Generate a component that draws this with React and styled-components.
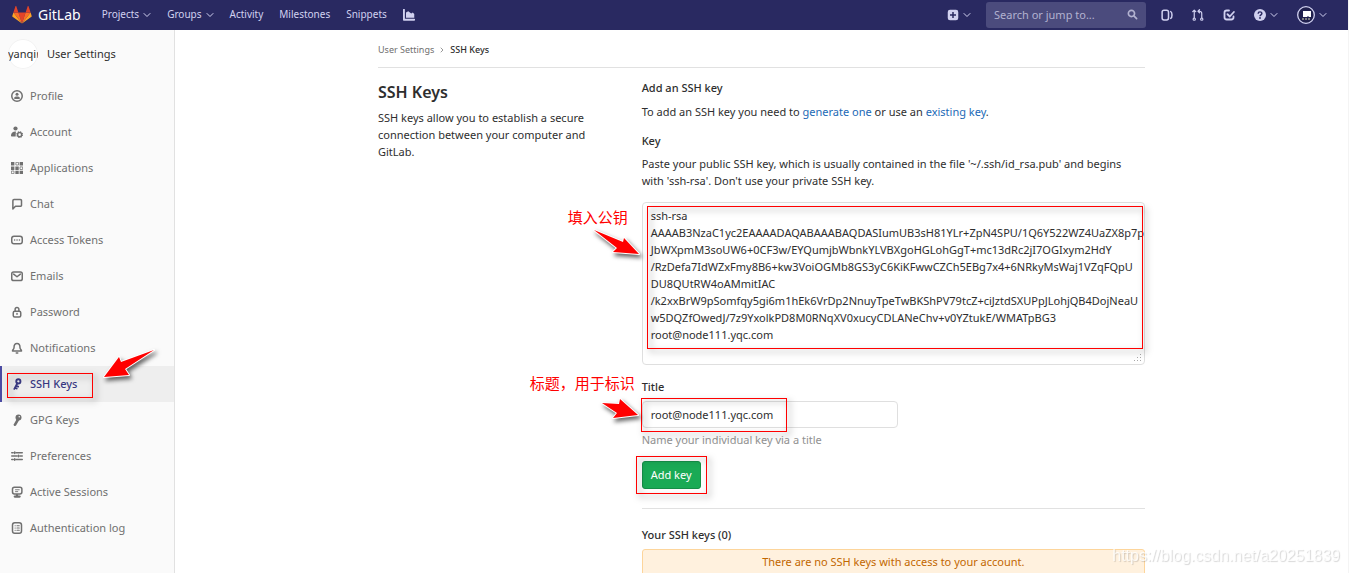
import React from 'react';
import styled, { createGlobalStyle } from 'styled-components';

const GlobalStyle = createGlobalStyle`
  *, *::before, *::after {
    box-sizing: border-box;
  }

  body {
    margin: 0;
    background: #fff;
    color: #2e2e2e;
    font-family: 'Noto Sans', 'Noto Sans CJK SC', sans-serif;
    font-size: 11px;
    line-height: 17px;
  }

  h1, h2, p {
    margin: 0;
  }
`;

const Page = styled.div`
  height: 100vh;
  display: flex;
  flex-direction: column;
  overflow: hidden;
  border-right: 1px solid #f4f4f4;
`;

const Navbar = styled.header`
  height: 30px;
  flex-shrink: 0;
  display: flex;
  align-items: center;
  justify-content: space-between;
  padding: 0 21px 1px 12px;
  background: #292961;
  color: #d1d1f0;
`;

const NavGroup = styled.nav`
  display: flex;
  align-items: center;
  gap: ${props => props.$gap}px;
`;

const Brand = styled.a`
  display: flex;
  align-items: center;
  gap: 6px;
  margin-right: 5px;
  color: #fff;
  font-size: 14px;
  text-decoration: none;
`;

const NavLink = styled.a`
  display: flex;
  align-items: center;
  gap: 4px;
  color: #d1d1f0;
  font-size: 10px;
  text-decoration: none;
`;

const NavButton = styled.button`
  display: flex;
  align-items: center;
  gap: 4px;
  padding: 0;
  border: none;
  background: none;
  color: #d1d1f0;
  font: inherit;
  font-size: 10px;
  cursor: pointer;
`;

const SearchBox = styled.label`
  width: 160px;
  height: 26px;
  display: flex;
  align-items: center;
  padding: 0 8px;
  border-radius: 3px;
  background: #4b4b7d;
  color: #b2b2d0;
`;

const SearchInput = styled.input`
  flex: 1;
  min-width: 0;
  padding: 0;
  border: none;
  outline: none;
  background: transparent;
  color: #fff;
  font: inherit;

  &::placeholder {
    color: #b2b2d0;
    opacity: 1;
  }
`;

const Body = styled.div`
  flex: 1;
  min-height: 0;
  display: flex;
`;

const Sidebar = styled.aside`
  width: 175px;
  flex-shrink: 0;
  background: #fafafa;
  border-right: 1px solid #e1e1e1;
  line-height: 16px;
`;

const SidebarHeader = styled.a`
  height: 48px;
  display: flex;
  align-items: center;
  gap: 9px;
  padding-left: 8px;
  color: #2e2e2e;
  text-decoration: none;
`;

const Avatar = styled.span`
  width: 30px;
  height: 30px;
  border-radius: 50%;
  background: #fff;
  box-shadow: inset 0 0 0 1px #f2f2f2;
  line-height: 30px;
  white-space: nowrap;
  overflow: hidden;
`;

const Menu = styled.ul`
  margin: 0;
  padding: 0;
  list-style: none;
`;

const MenuItem = styled.li`
  position: relative;
`;

const MenuLink = styled.a`
  height: 36px;
  display: flex;
  align-items: center;
  gap: 7px;
  padding-left: 11px;
  background: ${props => (props.$active ? '#eeeeee' : 'transparent')};
  box-shadow: ${props => (props.$active ? 'inset 2px 0 0 #4b4ba3' : 'none')};
  color: ${props => (props.$active ? '#393982' : '#707070')};
  font-weight: ${props => (props.$active ? 500 : 400)};
  text-decoration: none;
`;

const Content = styled.main`
  flex: 1;
  min-width: 0;
  overflow: hidden;
`;

const Container = styled.div`
  max-width: 791px;
  margin: 0 auto;
  padding: 0 12px;
`;

const Breadcrumbs = styled.nav`
  height: 38px;
  display: flex;
  align-items: center;
  gap: 4px;
  padding-top: 2px;
  border-bottom: 1px solid #e1e1e1;
  color: #707070;
  font-size: 9px;
`;

const Crumb = styled.a`
  color: ${props => (props.$current ? '#2e2e2e' : '#707070')};
  font-weight: ${props => (props.$current ? 500 : 400)};
  text-decoration: none;
`;

const Columns = styled.div`
  display: grid;
  grid-template-columns: 1fr 2fr;
  margin: 0 -12px;
  padding-top: 11px;
`;

const Column = styled.section`
  min-width: 0;
  padding: 0 12px;
`;

const PageTitle = styled.h1`
  margin-bottom: 4px;
  font-size: 16px;
  font-weight: 600;
  line-height: 26px;
`;

const SectionTitle = styled.h2`
  font-size: 11px;
  font-weight: 500;
  line-height: 17px;
`;

const Intro = styled.p`
  padding: 7px 0 12px;
`;

const TextLink = styled.a`
  color: #1b69b6;
  text-decoration: none;
`;

const Label = styled.label`
  display: block;
  margin-bottom: 6px;
  font-weight: 500;
`;

const KeyField = styled.div`
  position: relative;
  margin: 13px 0;
`;

const TextArea = styled.textarea`
  display: block;
  width: 100%;
  height: 163px;
  padding: 4px 8px;
  border: 1px solid #dfdfdf;
  border-radius: 4px;
  outline: none;
  color: #2e2e2e;
  font: inherit;
  white-space: pre;
  overflow: hidden;

  &::-webkit-resizer {
    background: none;
  }
`;

const TitleField = styled.div`
  position: relative;
  width: 256px;
`;

const TextInput = styled.input`
  display: block;
  width: 100%;
  height: 27px;
  padding: 0 8px;
  border: 1px solid #dfdfdf;
  border-radius: 4px;
  outline: none;
  color: #2e2e2e;
  font: inherit;
`;

const Help = styled.p`
  padding: 3px 0 13px;
  color: #919191;
`;

const Submit = styled.div`
  position: relative;
  width: fit-content;
`;

const AddButton = styled.button`
  display: block;
  height: 28px;
  padding: 0 8px 1px;
  border: 1px solid #168f48;
  border-radius: 3px;
  background: #1aaa55;
  color: #fff;
  font: inherit;
  cursor: pointer;
`;

const Divider = styled.hr`
  margin: 19px 0 17px;
  border: none;
  border-top: 1px solid #e1e1e1;
`;

const Alert = styled.p`
  && {
    margin-top: 6px;
  }
  padding: 3px 12px 5px;
  border: 1px solid #fdd59b;
  border-radius: 3px;
  background: #fff1de;
  color: #c26700;
  text-align: center;
`;

// Annotation layer: frames, arrows and notes drawn over the controls
const Frame = styled.span`
  position: absolute;
  inset: ${props => props.$inset};
  border: 1px solid #f00;
  filter: drop-shadow(3px 3px 3px rgba(0, 0, 0, 0.5));
  pointer-events: none;
`;

const ArrowSvg = styled.svg`
  position: absolute;
  left: ${props => props.$left}px;
  top: ${props => props.$top}px;
  z-index: 1;
  overflow: visible;
  filter: drop-shadow(2px 3px 2px rgba(0, 0, 0, 0.6));
  pointer-events: none;
`;

const Grip = styled.svg`
  position: absolute;
  right: 3px;
  bottom: 3px;
  pointer-events: none;
`;

const Note = styled.span`
  position: absolute;
  right: calc(100% + ${props => props.$gap}px);
  top: ${props => props.$top}px;
  color: #f00;
  font-family: 'Noto Sans CJK SC', sans-serif;
  font-size: 15px;
  white-space: nowrap;
`;

const Watermark = styled.span`
  position: fixed;
  right: 9px;
  bottom: 9px;
  color: rgba(255, 255, 255, 0.8);
  font-family: 'Liberation Sans', sans-serif;
  font-size: 16px;
  text-shadow: 1px 1px 1px rgba(0, 0, 0, 0.16);
`;

const line = { fill: 'none', stroke: 'currentColor', strokeWidth: 2, strokeLinecap: 'round', strokeLinejoin: 'round' };

const icons = {
  chevron: <path {...line} d="M2 5l6 6 6-6" />,
  angle: <path {...line} stroke="#999" d="M6 4l4 4-4 4" />,
  chart: <path fill="currentColor" d="M0 1a1 1 0 0 1 2.500 0v12H15a1 1 0 0 1 0 2.500H1a1 1 0 0 1-1-1V1zm4 10.500V4.500L7 3l4 3 2-1.500 2 2v5z" />,
  plus: <path fill="currentColor" fillRule="evenodd" d="M4 1h8a3 3 0 0 1 3 3v8a3 3 0 0 1-3 3H4a3 3 0 0 1-3-3V4a3 3 0 0 1 3-3zm3 3v3H4v2h3v3h2V9h3V7H9V4z" />,
  search: <g {...line} strokeWidth="2.400"><circle cx="6.500" cy="6.500" r="4.500" /><path d="M10 10l4 4" /></g>,
  issues: <g {...line}><rect x="1.500" y="1.500" width="8.500" height="13" rx="2.500" /><path d="M13 3.500c2.200 1 2.200 8 0 9" /></g>,
  merge: <g {...line} strokeWidth="1.600"><circle cx="3" cy="13.500" r="1.500" /><circle cx="13" cy="13.500" r="1.500" /><path d="M3 12V2M1 3.500L3 1.500l2 2M13 12V6a3 3 0 0 0-3-3H8.500M10 1L8 3l2 2" /></g>,
  todo: <g {...line} strokeWidth="2.400"><path d="M8 2H5a3 3 0 0 0-3 3v6a3 3 0 0 0 3 3h6a3 3 0 0 0 3-3v-1" /><path d="M6 7l3 3 5.500-6" /></g>,
  question: (
    <g>
      <circle cx="8" cy="8" r="8" fill="currentColor" />
      <path d="M5.500 6.200C5.600 3 10.500 3.200 10.500 6c0 1.800-2.500 1.700-2.500 3.500" fill="none" stroke="#292961" strokeWidth="1.900" />
      <circle cx="8" cy="12" r="1.200" fill="#292961" />
    </g>
  ),
  profile: (
    <g>
      <circle cx="8" cy="8" r="7" {...line} />
      <circle cx="8" cy="5.800" r="2" fill="currentColor" />
      <path fill="currentColor" d="M4 11.300C4 9 6 8.500 8 8.500s4 .5 4 2.800c-1 .9-7 .9-8 0z" />
    </g>
  ),
  account: (
    <g fill="currentColor">
      <circle cx="6" cy="3.300" r="2.800" />
      <path d="M0 12.500C0 8.500 3 7 6.500 7.200L6.200 14H1.500C.5 14 0 13.500 0 12.500z" />
      <circle cx="11.500" cy="11.500" r="2.700" fill="none" stroke="currentColor" strokeWidth="2" />
      <circle cx="11.500" cy="11.500" r="3.800" fill="none" stroke="currentColor" strokeWidth="1.500" strokeDasharray="1.500 1.500" />
    </g>
  ),
  applications: (
    <g fill="currentColor">
      <path d="M0 0h4.500v4.500H0zM11.500 0H16v4.500h-4.500zM0 6h4.500v4.500H0zM5.800 6h4.500v4.500H5.800zM5.800 11.500h4.500V16H5.800zM11.500 11.500H16V16h-4.500z" />
      <path fill="none" stroke="currentColor" d="M6.500.5H10V4H6.500zM12 6.500h3.500V10H12zM.5 12H4v3.500H.5z" />
    </g>
  ),
  chat: <path {...line} d="M4 2h8.500A1.500 1.500 0 0 1 14 3.500v6A1.500 1.500 0 0 1 12.500 11H6l-3.500 3.500v-11A1.500 1.500 0 0 1 4 2z" />,
  token: <g {...line}><rect x="1" y="3" width="14" height="10" rx="3" /><path d="M4.800 8h.1M8 8h.1M11.200 8h.1" /></g>,
  email: <g {...line}><rect x="1" y="2.500" width="14" height="11.500" rx="2.500" /><path d="M3.500 5.500L8 9l4.500-3.500" /></g>,
  lock: <g {...line}><rect x="3" y="7" width="10" height="7.500" rx="2" /><path d="M5.500 7V4.500a2.500 2.500 0 0 1 5 0V7M8 10v1" /></g>,
  bell: <g {...line}><path d="M8 2C5 2 4 4.500 4 7.500c0 2-2 3-2 4.500h12c0-1.500-2-2.500-2-4.500C12 4.500 11 2 8 2z" /><path d="M7 14.500h2" /></g>,
  sshKey: (
    <g {...line}>
      <circle cx="9.800" cy="4.500" r="2.800" strokeWidth="2.500" />
      <path strokeWidth="2.500" d="M8.500 7L4.500 14.500M7 10.500l2.500 1M5.500 13l2 1" />
    </g>
  ),
  gpgKey: (
    <g fill="currentColor">
      <circle cx="10" cy="4.500" r="4" />
      <path d="M8 6l3 2-4.500 7.500-2.500.5-.5-2z" />
      <circle cx="11" cy="3.500" r="1" fill="#fafafa" />
    </g>
  ),
  preferences: <g {...line}><path d="M1 3.500h2M7 3.500h8M1 8h7M12 8h3M1 12.500h2M7 12.500h8M5 2.500v2M10 7v2M5 11.500v2" /></g>,
  session: (
    <g {...line}>
      <rect x="2" y="1.500" width="12.500" height="9" rx="2.500" />
      <path d="M6 5h5M6 7.500h3" strokeWidth="1.200" />
      <path d="M8 12v2M5 14h6.500" strokeWidth="3" />
    </g>
  ),
  log: (
    <g {...line}>
      <rect x="2" y="1" width="12" height="14" rx="3" />
      <path d="M5.500 5h.1M8 5h3M5.500 8h.1M8 8h3M5.500 11h.1M8 11h3" strokeWidth="1.600" />
    </g>
  ),
};

const Icon = ({ name, size = 12 }) => (
  <svg width={size} height={size} viewBox="0 0 16 16" aria-hidden="true">{icons[name]}</svg>
);

const Logo = () => (
  <svg width="20" height="18" viewBox="0 0 36 33" aria-hidden="true">
    <path fill="#e24329" d="M18 32l6.600-20H11.400z" />
    <path fill="#fc6d26" d="M18 32l-6.600-20H2.200zM18 32l6.600-20h9.200z" />
    <path fill="#fca326" d="M2.200 12l-2 6.200c-.2.600 0 1.200.5 1.500L18 32zM33.800 12l2 6.200c.2.600 0 1.200-.5 1.500L18 32z" />
    <path fill="#e24329" d="M2.200 12h9.200L7.400 0c-.2-.6-1-.6-1.200 0zM33.800 12h-9.200l4-12c.2-.6 1-.6 1.200 0z" />
  </svg>
);

const UserBadge = () => (
  <svg width="18" height="18" viewBox="0 0 18 18" aria-hidden="true">
    <circle cx="9" cy="9" r="8.300" fill="#20204d" stroke="#d1d1f0" strokeWidth="1.300" />
    <path fill="#fff" d="M6 5h8v6h-2l-1-1-1 1H6z" />
    <path stroke="#d8d8b8" strokeWidth="1.200" strokeDasharray="2 1" d="M5 13h9" />
  </svg>
);

const Arrow = ({ left, top, points }) => (
  <ArrowSvg $left={left} $top={top} width="56" height="32" aria-hidden="true">
    <polygon points={points} fill="#f00" stroke="#fff" strokeWidth="2" strokeLinejoin="round" paintOrder="stroke" />
  </ArrowSvg>
);

const menuItems = [
  { icon: 'profile', label: 'Profile' },
  { icon: 'account', label: 'Account' },
  { icon: 'applications', label: 'Applications' },
  { icon: 'chat', label: 'Chat' },
  { icon: 'token', label: 'Access Tokens' },
  { icon: 'email', label: 'Emails' },
  { icon: 'lock', label: 'Password' },
  { icon: 'bell', label: 'Notifications' },
  { icon: 'sshKey', label: 'SSH Keys', active: true },
  { icon: 'gpgKey', label: 'GPG Keys' },
  { icon: 'preferences', label: 'Preferences' },
  { icon: 'session', label: 'Active Sessions' },
  { icon: 'log', label: 'Authentication log' },
];

const publicKey = [
  'ssh-rsa',
  'AAAAB3NzaC1yc2EAAAADAQABAAABAQDASIumUB3sH81YLr+ZpN4SPU/1Q6Y522WZ4UaZX8p7p',
  'JbWXpmM3soUW6+0CF3w/EYQumjbWbnkYLVBXgoHGLohGgT+mc13dRc2jI7OGIxym2HdY',
  '/RzDefa7IdWZxFmy8B6+kw3VoiOGMb8GS3yC6KiKFwwCZCh5EBg7x4+6NRkyMsWaj1VZqFQpU',
  'DU8QUtRW4oAMmitIAC',
  '/k2xxBrW9pSomfqy5gi6m1hEk6VrDp2NnuyTpeTwBKShPV79tcZ+ciJztdSXUPpJLohjQB4DojNeaU',
  'w5DQZfOwedJ/7z9YxolkPD8M0RNqXV0xucyCDLANeChv+v0YZtukE/WMATpBG3',
  'root@node111.yqc.com',
].join('\n');

const TopBar = () => (
  <Navbar>
    <NavGroup $gap={16}>
      <Brand href="#"><Logo />GitLab</Brand>
      <NavButton type="button">Projects<Icon name="chevron" size={8} /></NavButton>
      <NavButton type="button">Groups<Icon name="chevron" size={8} /></NavButton>
      <NavLink href="#">Activity</NavLink>
      <NavLink href="#">Milestones</NavLink>
      <NavLink href="#">Snippets</NavLink>
      <NavLink href="#" aria-label="Instance statistics"><Icon name="chart" /></NavLink>
    </NavGroup>
    <NavGroup $gap={15}>
      <NavButton type="button" aria-label="New"><Icon name="plus" /><Icon name="chevron" size={8} /></NavButton>
      <SearchBox>
        <SearchInput type="text" placeholder="Search or jump to..." aria-label="Search" />
        <Icon name="search" size={11} />
      </SearchBox>
      <NavGroup $gap={19}>
        <NavLink href="#" aria-label="Issues"><Icon name="issues" /></NavLink>
        <NavLink href="#" aria-label="Merge requests"><Icon name="merge" /></NavLink>
        <NavLink href="#" aria-label="Todos"><Icon name="todo" /></NavLink>
        <NavButton type="button" aria-label="Help"><Icon name="question" /><Icon name="chevron" size={8} /></NavButton>
        <NavButton type="button" aria-label="User menu"><UserBadge /><Icon name="chevron" size={8} /></NavButton>
      </NavGroup>
    </NavGroup>
  </Navbar>
);

const App = () => (
  <>
    <GlobalStyle />
    <Page>
      <TopBar />
      <Body>
        <Sidebar>
          <SidebarHeader href="#">
            <Avatar>yanqin</Avatar>
            User Settings
          </SidebarHeader>
          <Menu>
            {menuItems.map(item => (
              <MenuItem key={item.label}>
                <MenuLink href="#" $active={item.active}>
                  <Icon name={item.icon} />
                  {item.label}
                </MenuLink>
                {item.active && (
                  <>
                    <Frame $inset="7px 81px 4px 7px" />
                    <Arrow left={102} top={-18} points="2,29 17,9 19,14 52,2 23,21 27,27" />
                  </>
                )}
              </MenuItem>
            ))}
          </Menu>
        </Sidebar>
        <Content>
          <Container>
            <Breadcrumbs aria-label="Breadcrumb">
              <Crumb href="#">User Settings</Crumb>
              <Icon name="angle" size={8} />
              <Crumb href="#" $current>SSH Keys</Crumb>
            </Breadcrumbs>
            <Columns>
              <Column>
                <PageTitle>SSH Keys</PageTitle>
                <p>SSH keys allow you to establish a secure connection between your computer and GitLab.</p>
              </Column>
              <Column>
                <SectionTitle>Add an SSH key</SectionTitle>
                <Intro>
                  To add an SSH key you need to <TextLink href="#">generate one</TextLink> or use an{' '}
                  <TextLink href="#">existing key</TextLink>.
                </Intro>
                <form onSubmit={(e) => e.preventDefault()}>
                  <Label htmlFor="key">Key</Label>
                  <p>
                    Paste your public SSH key, which is usually contained in the file '~/.ssh/id_rsa.pub' and begins
                    with 'ssh-rsa'. Don't use your private SSH key.
                  </p>
                  <KeyField>
                    <TextArea id="key" defaultValue={publicKey} spellCheck={false} />
                    <Grip width="8" height="8" viewBox="0 0 8 8" aria-hidden="true">
                      <path fill="#a8a8a8" d="M6 0h1v1H6zM3 3h1v1H3zM6 3h1v1H6zM0 6h1v1H0zM3 6h1v1H3zM6 6h1v1H6z" />
                    </Grip>
                    <Frame $inset="4px 2px 16px 5px" />
                    <Note $gap={14} $top={6}>填入公钥</Note>
                    <Arrow left={-50} top={26} points="2,2 31,14 32,10 47,26 21,24 25,20" />
                  </KeyField>
                  <Label htmlFor="title">Title</Label>
                  <TitleField>
                    <TextInput id="title" type="text" defaultValue="root@node111.yqc.com" />
                    <Frame $inset="-3px 111px -4px -1px" />
                    <Note $gap={7} $top={-27}>标题，用于标识</Note>
                    <Arrow left={-42} top={-3} points="2,5 19,6 20,1 38,17 13,20 17,15" />
                  </TitleField>
                  <Help>Name your individual key via a title</Help>
                  <Submit>
                    <AddButton type="submit">Add key</AddButton>
                    <Frame $inset="-5px -6px" />
                  </Submit>
                </form>
                <Divider />
                <SectionTitle>Your SSH keys (0)</SectionTitle>
                <Alert>There are no SSH keys with access to your account.</Alert>
              </Column>
            </Columns>
          </Container>
        </Content>
      </Body>
    </Page>
    <Watermark>https://blog.csdn.net/a20251839</Watermark>
  </>
);

export default App;
